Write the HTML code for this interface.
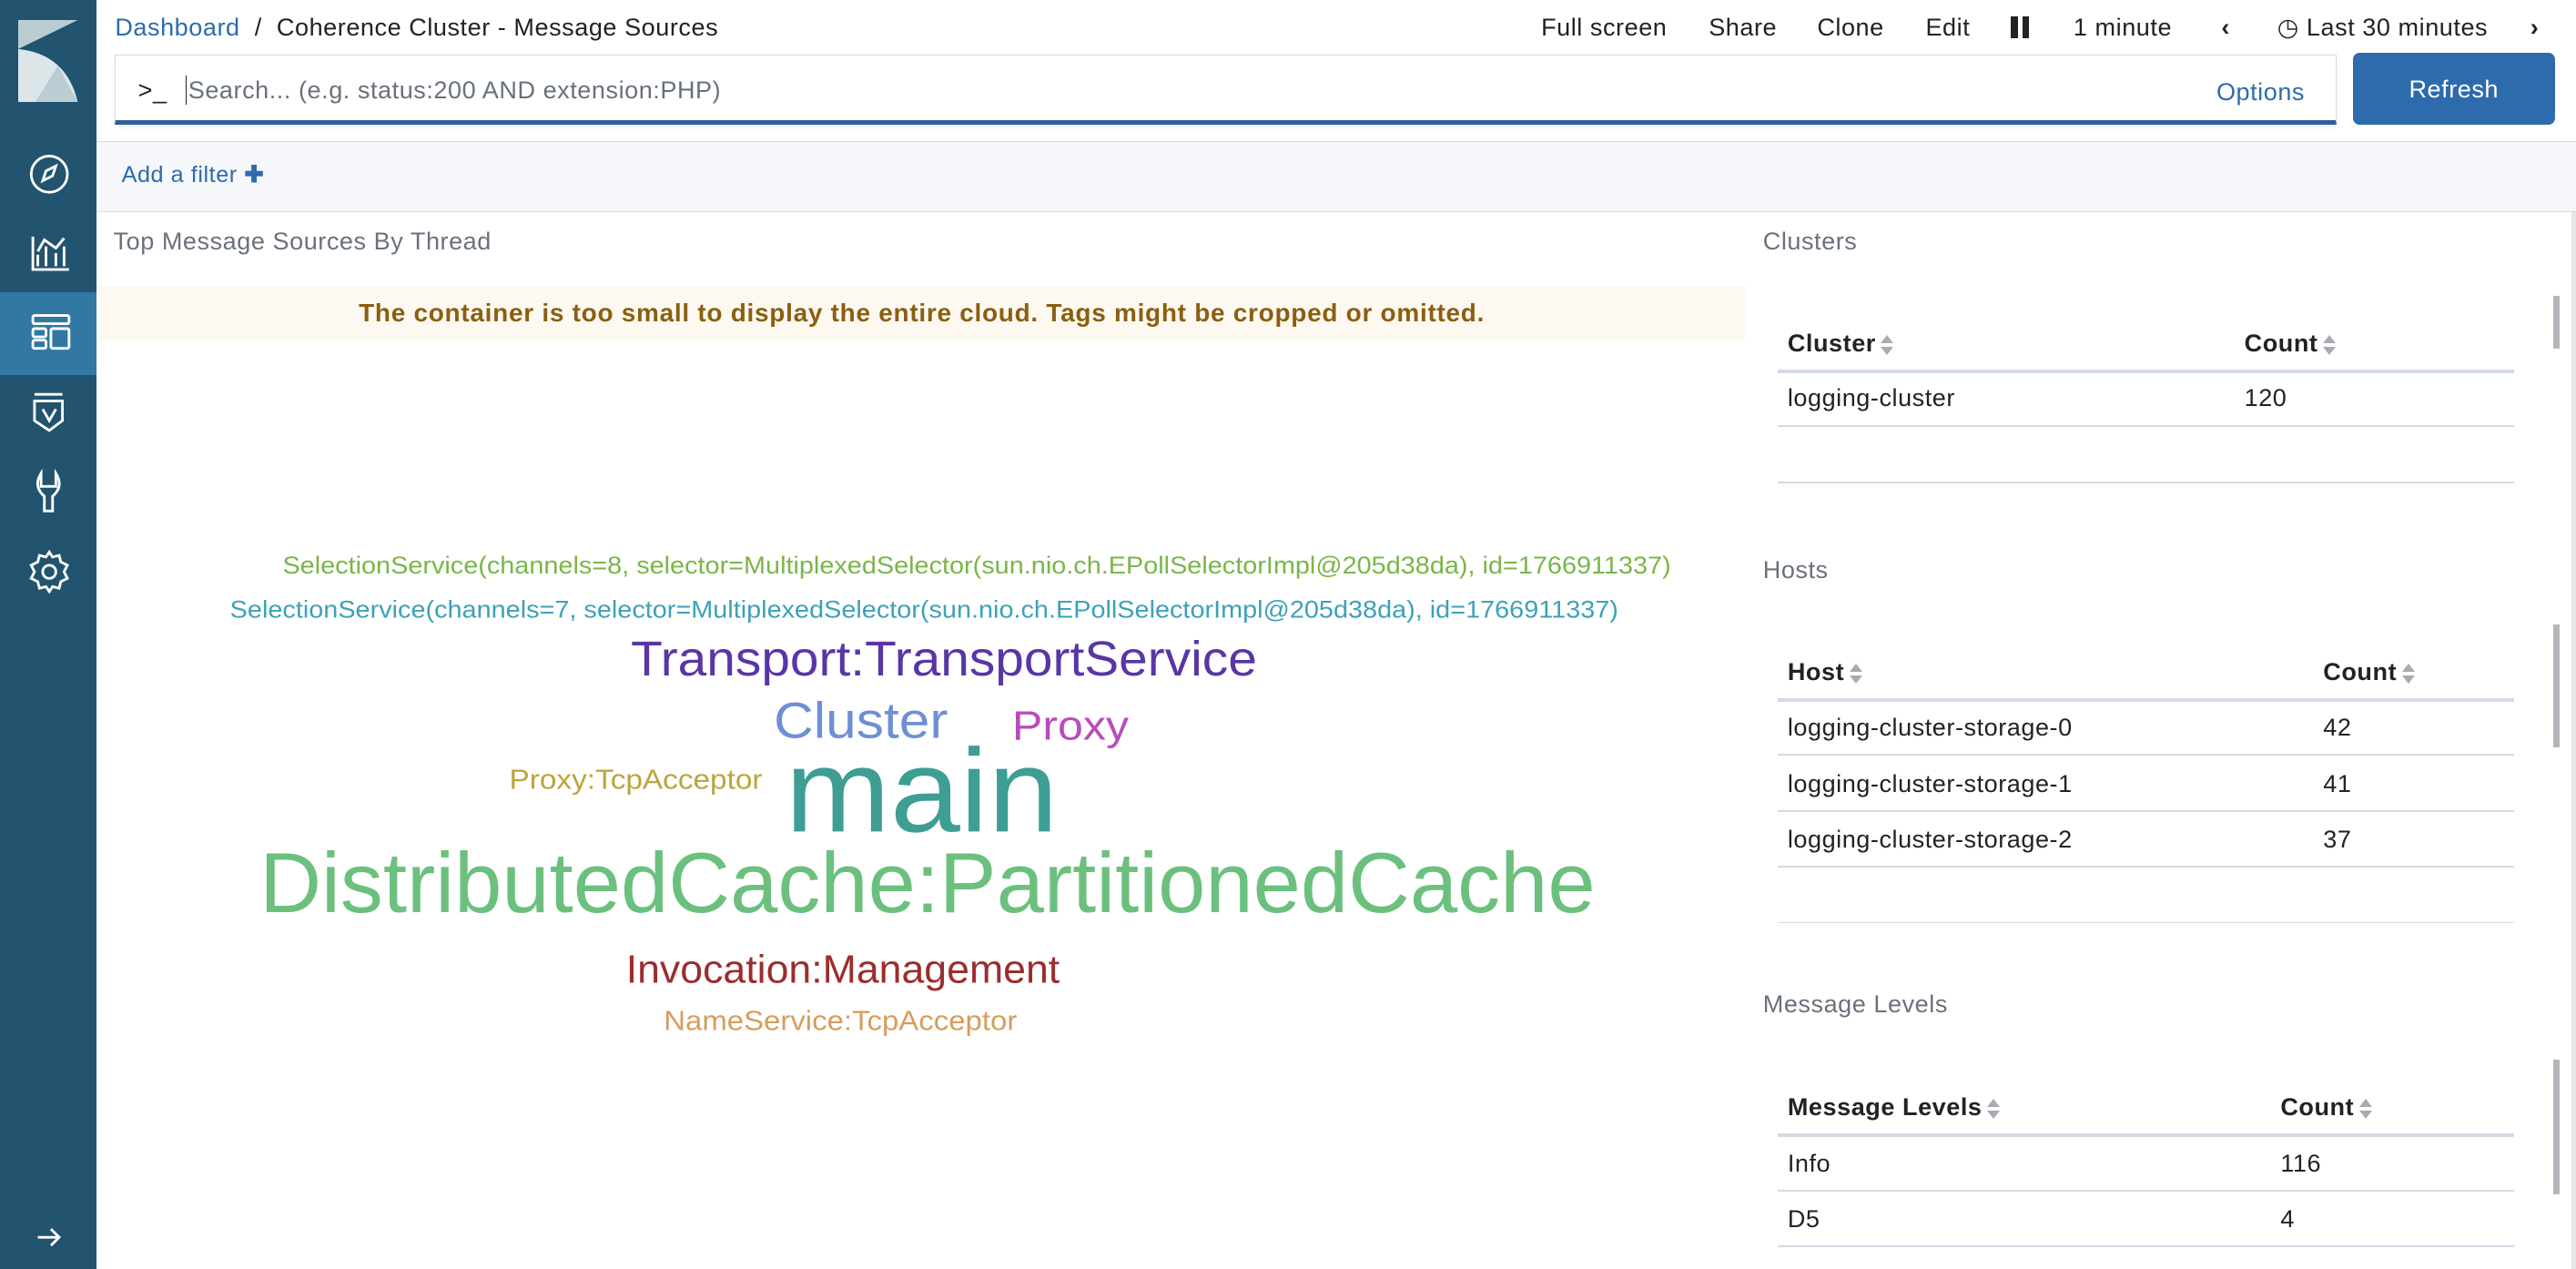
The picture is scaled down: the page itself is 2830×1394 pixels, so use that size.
<!DOCTYPE html>
<html><head><meta charset="utf-8"><style>
*{margin:0;padding:0;box-sizing:border-box}
html,body{width:2830px;height:1394px;overflow:hidden;background:#fff}
#root{zoom:1.805;width:1568px;height:773px;position:relative;font-family:"Liberation Sans",sans-serif;color:#333;letter-spacing:0.3px}
.abs{position:absolute;white-space:nowrap}
#side{left:0;top:0;width:59px;height:773px;background:#22536f}
.sel{left:0;top:178px;width:59px;height:50px;background:#3178a3}
.top{font-size:15px;color:#222;top:8px}
.th{font-weight:bold;font-size:15px;color:#222}
.td{font-size:15px;color:#222}
.line{height:1px;background:#d3dae6;left:1082px;width:448px}
.title{font-size:15px;color:#6a717d}
.sb{left:1554px;width:4px;background:#b3b6bb}
.sort{display:inline-block;margin-left:3px;vertical-align:middle;width:8px;height:12px;position:relative}
.sort:before{content:"";position:absolute;left:0;top:0;border-left:4px solid transparent;border-right:4px solid transparent;border-bottom:5px solid #a7abb2}
.sort:after{content:"";position:absolute;left:0;top:7px;border-left:4px solid transparent;border-right:4px solid transparent;border-top:5px solid #a7abb2}
</style></head><body><div id="root">
<div class="abs" id="side"></div>
<svg class="abs" style="left:11px;top:12px" width="38" height="50" viewBox="0 0 22 34" preserveAspectRatio="none"><polygon points="0,0 21,0 0,12" fill="#b9cdd3"/><path d="M0,12 Q17,14 21,34 L0,34 Z" fill="#dce6e8"/><polygon points="6,34 14,19 21,34" fill="#b9cdd3"/></svg>
<div class="abs sel"></div>
<svg class="abs" style="left:0;top:0" width="59" height="773" fill="none" stroke="#fff" stroke-width="1.6">
<circle cx="30" cy="106" r="11"/><path d="M26,110 L28,104 L34,101 L32,107 Z"/>
<path d="M20,144 V164 H42 M23,162 V155 M28,162 V150 M34,162 V154 M39,162 V150 M23,153 L27,146 L34,151 L39,145"/>
<rect x="20" y="192" width="22" height="5" rx="1"/><rect x="20" y="200" width="8" height="5" rx="1"/><rect x="20" y="207" width="8" height="5" rx="1"/><rect x="31" y="200" width="11" height="12" rx="1"/>
<path d="M21,240 H38 M21,244 H38 L38,256 L30,262 L21,256 Z M26,249 L30,256 L34,249"/>
<path d="M25,288 Q20,296 27,302 V311 H32 V302 Q39,296 34,288 V296 H25 Z"/>
<circle cx="30" cy="348" r="4"/><path d="M30,336 L32,339 L36,338 L37,342 L41,344 L39,348 L41,352 L37,354 L36,358 L32,357 L30,360 L28,357 L24,358 L23,354 L19,352 L21,348 L19,344 L23,342 L24,338 L28,339 Z"/>
<path d="M23,753 H36 M31,748 L36,753 L31,758"/>
</svg>
<div class="abs top" style="left:70px"><span style="color:#2d6bad">Dashboard</span> &nbsp;/&nbsp; Coherence Cluster - Message Sources</div>
<div class="abs top" style="left:938px;word-spacing:0">Full screen</div>
<div class="abs top" style="left:1040px">Share</div>
<div class="abs top" style="left:1106px">Clone</div>
<div class="abs top" style="left:1172px">Edit</div>
<div class="abs" style="left:1224px;top:10px;width:4px;height:13px;background:#222"></div><div class="abs" style="left:1231px;top:10px;width:4px;height:13px;background:#222"></div>
<div class="abs top" style="left:1262px">1 minute</div>
<div class="abs top" style="left:1352px;font-weight:bold">&#8249;</div>
<div class="abs top" style="left:1386px">&#9719; Last 30 minutes</div>
<div class="abs top" style="left:1540px;font-weight:bold">&#8250;</div>
<div class="abs" style="left:70px;top:33px;width:1352px;height:43px;border:1px solid #d5d9de;border-bottom:3px solid #2d5f9a;box-shadow:0 2px 3px rgba(0,0,0,.06)"></div>
<div class="abs" style="left:84px;top:46px;font-size:15px;color:#222">&gt;_</div>
<div class="abs" style="left:113px;top:46px;font-size:15px;color:#69707d;border-left:1px solid #222;padding-left:1px">Search... (e.g. status:200 AND extension:PHP)</div>
<div class="abs" style="left:1349px;top:47px;font-size:15px;color:#2d6bad">Options</div>
<div class="abs" style="left:1432px;top:32px;width:123px;height:44px;background:#2d6bad;border-radius:4px;color:#fff;font-size:15px;text-align:center;line-height:44px">Refresh</div>
<div class="abs" style="left:59px;top:86px;width:1509px;height:43px;background:#f5f7fa;border-top:1px solid #d3dae6;border-bottom:1px solid #d3dae6"></div>
<div class="abs" style="left:74px;top:98px;font-size:14px;color:#2d6bad">Add a filter <b>&#10010;</b></div>
<div class="abs title" style="left:69px;top:138px">Top Message Sources By Thread</div>
<div class="abs" style="left:60px;top:174px;width:1002px;height:33px;background:#fdf9f1;text-align:center;line-height:33px;font-size:15.5px;font-weight:bold;color:#8a5f10;letter-spacing:0.4px">The container is too small to display the entire cloud. Tags might be cropped or omitted.</div>
<svg class="abs" style="left:0;top:0;letter-spacing:0" width="1070" height="773" font-family="Liberation Sans, sans-serif">
<text x="172" y="349" font-size="15" fill="#7ab648" textLength="845" lengthAdjust="spacingAndGlyphs">SelectionService(channels=8, selector=MultiplexedSelector(sun.nio.ch.EPollSelectorImpl@205d38da), id=1766911337)</text>
<text x="140" y="376" font-size="15" fill="#3ea1b8" textLength="845" lengthAdjust="spacingAndGlyphs">SelectionService(channels=7, selector=MultiplexedSelector(sun.nio.ch.EPollSelectorImpl@205d38da), id=1766911337)</text>
<text x="384" y="411" font-size="30" fill="#5a35a6" textLength="381" lengthAdjust="spacingAndGlyphs">Transport:TransportService</text>
<text x="471" y="449" font-size="31" fill="#6e8fd5" textLength="106" lengthAdjust="spacingAndGlyphs">Cluster</text>
<text x="616" y="450" font-size="25" fill="#b94bbd" textLength="71" lengthAdjust="spacingAndGlyphs">Proxy</text>
<text x="310" y="480" font-size="17" fill="#bca53a" textLength="154" lengthAdjust="spacingAndGlyphs">Proxy:TcpAcceptor</text>
<text x="478" y="506" font-size="72" fill="#3e9e93" textLength="166" lengthAdjust="spacingAndGlyphs">main</text>
<text x="158" y="555" font-size="52" fill="#6cc07e" textLength="813" lengthAdjust="spacingAndGlyphs">DistributedCache:PartitionedCache</text>
<text x="381" y="598" font-size="24" fill="#9c2d2d" textLength="264" lengthAdjust="spacingAndGlyphs">Invocation:Management</text>
<text x="404" y="627" font-size="17" fill="#d79d5c" textLength="215" lengthAdjust="spacingAndGlyphs">NameService:TcpAcceptor</text>
</svg>
<div class="abs title" style="left:1073px;top:138px">Clusters</div>
<div class="abs th" style="left:1088px;top:200px">Cluster<span class="sort"></span></div>
<div class="abs th" style="left:1366px;top:200px">Count<span class="sort"></span></div>
<div class="abs line" style="top:225px;height:2px"></div>
<div class="abs td" style="left:1088px;top:233px">logging-cluster</div>
<div class="abs td" style="left:1366px;top:233px">120</div>
<div class="abs line" style="top:259px"></div>
<div class="abs line" style="top:293px"></div>
<div class="abs sb" style="top:180px;height:32px"></div>
<div class="abs title" style="left:1073px;top:338px">Hosts</div>
<div class="abs th" style="left:1088px;top:400px">Host<span class="sort"></span></div>
<div class="abs th" style="left:1414px;top:400px">Count<span class="sort"></span></div>
<div class="abs line" style="top:425px;height:2px"></div>
<div class="abs td" style="left:1088px;top:434px">logging-cluster-storage-0</div><div class="abs td" style="left:1414px;top:434px">42</div>
<div class="abs line" style="top:459px"></div>
<div class="abs td" style="left:1088px;top:468px">logging-cluster-storage-1</div><div class="abs td" style="left:1414px;top:468px">41</div>
<div class="abs line" style="top:493px"></div>
<div class="abs td" style="left:1088px;top:502px">logging-cluster-storage-2</div><div class="abs td" style="left:1414px;top:502px">37</div>
<div class="abs line" style="top:527px"></div>
<div class="abs line" style="top:561px"></div>
<div class="abs sb" style="top:380px;height:75px"></div>
<div class="abs title" style="left:1073px;top:602px">Message Levels</div>
<div class="abs th" style="left:1088px;top:665px">Message Levels<span class="sort"></span></div>
<div class="abs th" style="left:1388px;top:665px">Count<span class="sort"></span></div>
<div class="abs line" style="top:690px;height:2px"></div>
<div class="abs td" style="left:1088px;top:699px">Info</div><div class="abs td" style="left:1388px;top:699px">116</div>
<div class="abs line" style="top:724px"></div>
<div class="abs td" style="left:1088px;top:733px">D5</div><div class="abs td" style="left:1388px;top:733px">4</div>
<div class="abs line" style="top:758px"></div>
<div class="abs sb" style="top:645px;height:82px"></div>
<div class="abs" style="left:1565px;top:129px;width:3px;height:644px;background:#e6e6e6"></div>
</div></body></html>
